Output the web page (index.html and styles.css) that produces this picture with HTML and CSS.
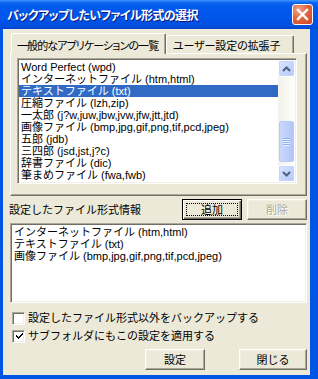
FILE: index.html
```html
<!DOCTYPE html>
<html lang="ja">
<head>
<meta charset="utf-8">
<title>バックアップしたいファイル形式の選択</title>
<link rel="stylesheet" href="styles.css">
</head>
<body>
<div class="window">
  <div class="titlebar">
    <span class="title">バックアップしたいファイル形式の選択</span>
    <button class="close" aria-label="閉じる">
      <svg width="19" height="19" viewBox="0 0 19 19"><path d="M5 5 L14 14 M14 5 L5 14" stroke="#fff" stroke-width="2.4" stroke-linecap="square" fill="none"/></svg>
    </button>
  </div>
  <div class="client">
    <div class="tabs">
      <div class="tab tab1 active">一般的なアプリケーションの一覧</div>
      <div class="tab tab2">ユーザー設定の拡張子</div>
    </div>
    <div class="panel">
      <div class="listbox list1">
        <ul class="items">
          <li>Word Perfect (wpd)</li>
          <li>インターネットファイル (htm,html)</li>
          <li class="selected">テキストファイル (txt)</li>
          <li>圧縮ファイル (lzh,zip)</li>
          <li>一太郎 (j?w,juw,jbw,jvw,jfw,jtt,jtd)</li>
          <li>画像ファイル (bmp,jpg,gif,png,tif,pcd,jpeg)</li>
          <li>五郎 (jdb)</li>
          <li>三四郎 (jsd,jst,j?c)</li>
          <li>辞書ファイル (dic)</li>
          <li>筆まめファイル (fwa,fwb)</li>
        </ul>
        <div class="scrollbar">
          <div class="sbtn">
            <svg width="9" height="6" viewBox="0 0 9 6"><path d="M1 5 L4.5 1.5 L8 5" stroke="#4D6185" stroke-width="2" fill="none"/></svg>
          </div>
          <div class="track">
            <div class="thumb" style="margin-top:44px;height:41px">
              <svg width="7" height="8" viewBox="0 0 7 8"><path d="M0 0.5H7M0 2.5H7M0 4.5H7M0 6.5H7" stroke="#8CB0F8" stroke-width="1"/><path d="M0 1.5H7M0 3.5H7M0 5.5H7M0 7.5H7" stroke="#EEF4FE" stroke-width="1"/></svg>
            </div>
          </div>
          <div class="sbtn">
            <svg width="9" height="6" viewBox="0 0 9 6"><path d="M1 1 L4.5 4.5 L8 1" stroke="#4D6185" stroke-width="2" fill="none"/></svg>
          </div>
        </div>
      </div>
    </div>
    <div class="labelrow">
      <span class="label">設定したファイル形式情報</span>
      <button class="btn btn-add default"><span class="focus">追加</span></button>
      <button class="btn btn-del disabled">削除</button>
    </div>
    <div class="listbox list2">
      <ul class="items">
        <li>インターネットファイル (htm,html)</li>
        <li>テキストファイル (txt)</li>
        <li>画像ファイル (bmp,jpg,gif,png,tif,pcd,jpeg)</li>
      </ul>
    </div>
    <div class="check check1">
      <span class="box"></span>
      <span class="ctext">設定したファイル形式以外をバックアップする</span>
    </div>
    <div class="check">
      <span class="box"><svg width="9" height="9" viewBox="0 0 9 9"><path d="M1 3 L1 5 L3 7 L8 2 L8 0 L3 5 Z" fill="#000" shape-rendering="crispEdges"/></svg></span>
      <span class="ctext">サブフォルダにもこの設定を適用する</span>
    </div>
    <div class="buttonrow">
      <button class="btn btn-ok">設定</button>
      <button class="btn btn-close">閉じる</button>
    </div>
  </div>
</div>
</body>
</html>
```
FILE: styles.css
```css
html, body {
  margin: 0;
  padding: 0;
  background: #ffffff;
}

.window {
  width: 318px;
  height: 379px;
  box-sizing: border-box;
  display: flex;
  flex-direction: column;
  background: #0055E5;
  font-family: "Liberation Sans", "Noto Sans CJK JP", sans-serif;
  font-size: 11px;
  line-height: 12px;
  color: #000;
}

.titlebar {
  height: 29px;
  flex: none;
  display: flex;
  align-items: center;
  padding: 0 5px 0 7px;
  background: linear-gradient(#3D95FF 0, #0A62F0 3px, #0058EE 8px, #0055EB 60%, #004FE0 90%, #0044CF 100%);
}

.title {
  color: #fff;
  font-family: "Noto Sans CJK JP", sans-serif;
  font-weight: bold;
  font-size: 12px;
  line-height: 14px;
  letter-spacing: -0.6px;
  font-feature-settings: "palt";
  text-shadow: 1px 1px 0 #0A1A7A;
  padding-top: 1px;
}

.close {
  margin-left: auto;
  width: 21px;
  height: 21px;
  padding: 0;
  border: 1px solid #fff;
  border-radius: 3px;
  background: radial-gradient(circle at 30% 25%, #F0A48C 0, #E3663F 45%, #CC4420 100%);
  display: flex;
  align-items: center;
  justify-content: center;
  box-sizing: border-box;
}

.client {
  flex: 1;
  margin: 0 8px 4px 3px;
  padding: 4px 3px 0 7px;
  background: #ECE9D8;
  display: flex;
  flex-direction: column;
}

.tabs {
  height: 20px;
  display: flex;
  align-items: flex-end;
  padding-left: 1px;
}

.tab {
  box-sizing: border-box;
  background: #ECE9D8;
  border-top: 1px solid #fff;
  border-left: 1px solid #fff;
  border-right: 1px solid #716F64;
  box-shadow: inset -1px 0 0 #ACA899;
  border-radius: 2px 2px 0 0;
  white-space: nowrap;
  overflow: hidden;
  font-family: "Noto Sans CJK JP", sans-serif;
  font-feature-settings: "palt";
}

.tab1 {
  width: 155px;
  height: 21px;
  margin-bottom: -1px;
  position: relative;
  z-index: 1;
  padding-left: 5px;
  padding-top: 5px;
  letter-spacing: -0.9px;
}

.tab2 {
  width: 128px;
  height: 18px;
  padding-left: 6px;
  padding-top: 3px;
  letter-spacing: -0.1px;
}

.panel {
  box-sizing: border-box;
  width: 297px;
  height: 143px;
  border: 1px solid;
  border-color: #fff #716F64 #716F64 #fff;
  box-shadow: inset -1px -1px 0 #ACA899;
  padding: 4px 0 0 6px;
}

.listbox {
  box-sizing: border-box;
  background: #fff;
  border: 1px solid;
  border-color: #ACA899 #fff #fff #ACA899;
  padding: 1px;
  box-shadow: inset 1px 1px 0 #716F64, inset -1px -1px 0 #F1EFE2;
  display: flex;
}

.list1 {
  width: 280px;
  height: 126px;
}

.list2 {
  width: 297px;
  height: 80px;
  margin-top: 3px;
}

.items {
  list-style: none;
  margin: 0;
  padding: 1px 0 0 0;
  flex: 1;
  min-width: 0;
}

.items li {
  height: 12px;
  line-height: 12px;
  padding-left: 2px;
  white-space: nowrap;
}

.items li.selected {
  background: #316AC5;
  color: #fff;
}

.scrollbar {
  width: 17px;
  flex: none;
  display: flex;
  flex-direction: column;
  background: linear-gradient(to right, #F3F1EA, #FEFEFB);
}

.sbtn {
  box-sizing: border-box;
  height: 17px;
  margin: 0;
  border: 1px solid #fff;
  border-radius: 2px;
  background: linear-gradient(135deg, #DDE7FE 0%, #C6D6FC 50%, #B5C9F7 100%);
  box-shadow: inset 0 0 0 1px #C3D3FB;
  display: flex;
  align-items: center;
  justify-content: center;
}

.track {
  flex: 1;
  padding: 0 1px;
}

.thumb {
  box-sizing: border-box;
  border: 1px solid #B6CAF7;
  border-radius: 2px;
  background: linear-gradient(to right, #C9D8FC, #BCCFFA 60%, #B2C6F5);
  display: flex;
  align-items: center;
  justify-content: center;
}

.labelrow {
  height: 21px;
  margin-top: 3px;
  display: flex;
  align-items: center;
}

.label {
  margin-left: -1px;
  white-space: nowrap;
}

.btn {
  box-sizing: border-box;
  height: 21px;
  padding: 0;
  font: inherit;
  color: #000;
  background: #ECE9D8;
  border: 1px solid;
  border-color: #fff #716F64 #716F64 #fff;
  box-shadow: inset -1px -1px 0 #ACA899, inset 1px 1px 0 #F1EFE2;
  display: flex;
  align-items: center;
  justify-content: center;
}

.btn.default {
  border: 1px solid #000;
  box-shadow: inset 1px 1px 0 #fff, inset -1px -1px 0 #716F64, inset -2px -2px 0 #ACA899;
  padding: 3px;
}

.focus {
  flex: 1;
  align-self: stretch;
  border: 1px dotted #000;
  display: flex;
  align-items: center;
  justify-content: center;
}

.btn-add {
  width: 60px;
  margin-left: auto;
}

.btn-del {
  width: 60px;
  margin-left: 5px;
}

.btn.disabled {
  color: #ACA899;
  text-shadow: 1px 1px 0 #fff;
}

.check {
  height: 18px;
  display: flex;
  align-items: center;
  padding-left: 2px;
}

.check1 {
  margin-top: 6px;
}

.box {
  box-sizing: border-box;
  width: 13px;
  height: 13px;
  background: #fff;
  border: 1px solid;
  border-color: #ACA899 #fff #fff #ACA899;
  box-shadow: inset 1px 1px 0 #716F64, inset -1px -1px 0 #F1EFE2;
  display: flex;
  align-items: center;
  justify-content: center;
  padding: 1px 0 0 1px;
}

.ctext {
  margin-left: 3px;
  white-space: nowrap;
}

.buttonrow {
  margin-top: 4px;
  display: flex;
  justify-content: flex-end;
}

.btn-ok {
  width: 60px;
}

.btn-close {
  width: 68px;
  margin-left: 34px;
}
```
